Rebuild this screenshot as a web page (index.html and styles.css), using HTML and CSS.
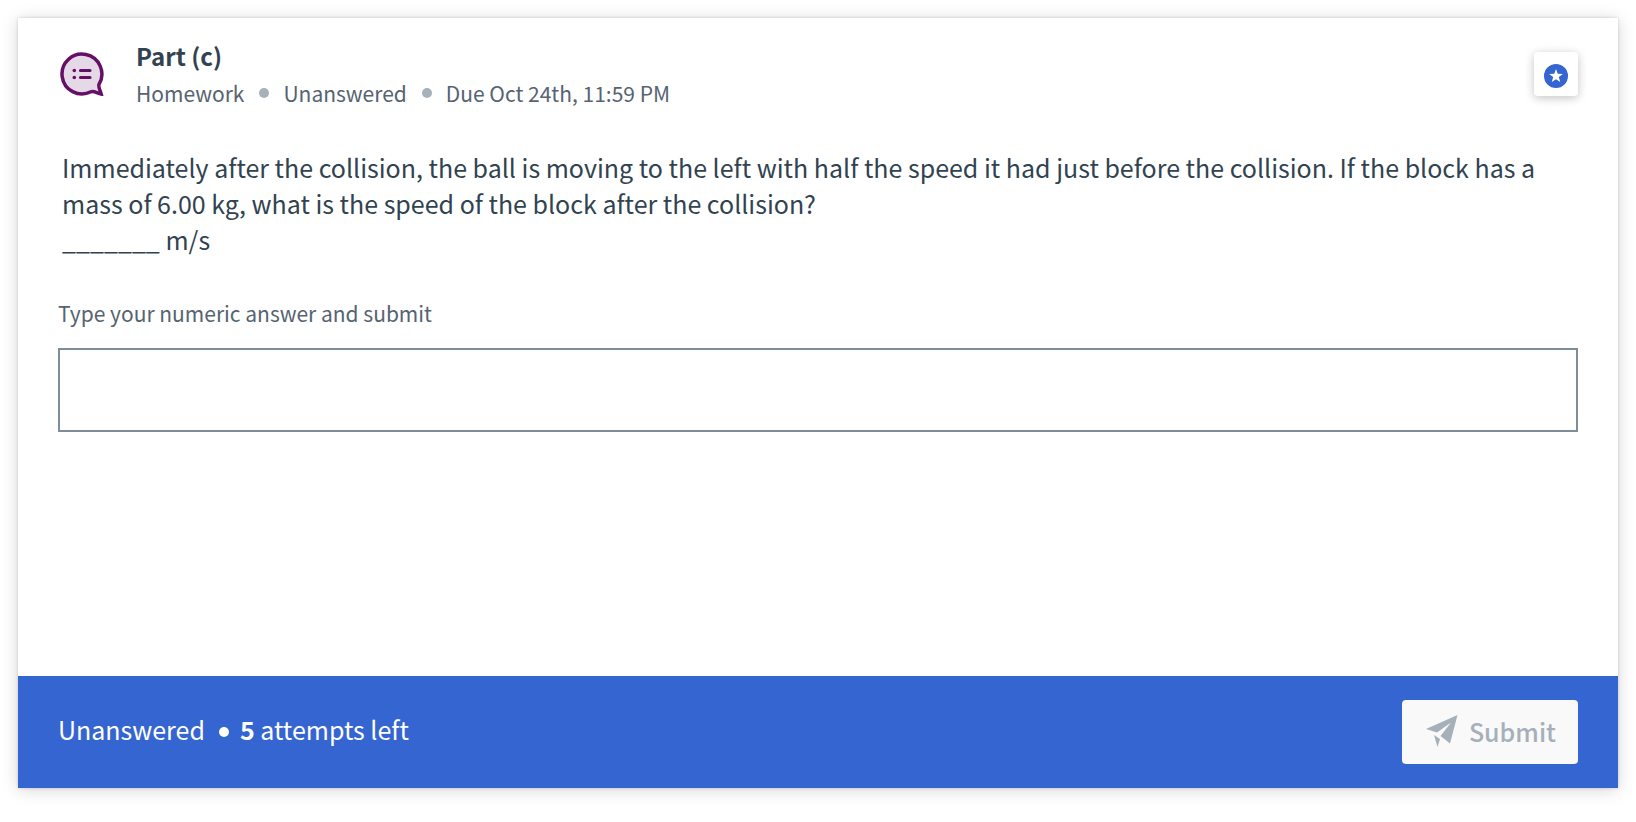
FILE: index.html
```html
<!DOCTYPE html>
<html lang="en">
<head>
<meta charset="utf-8">
<title>Part (c)</title>
<link rel="stylesheet" href="styles.css">
</head>
<body>
<main class="card">
  <header class="header">
    <svg class="type-icon" viewBox="0 0 44 44" aria-hidden="true">
      <path d="M30.9 39.8C33.5 38.8 37 41 41.2 42.1 40.1 38 37.8 34.6 39.1 32.1A19.9 19.9 0 1 0 30.9 39.8Z" fill="#e6d9e7" stroke="#650f66" stroke-width="3.5"/>
      <path d="M20.5 18.5H30M20.5 25.5H30" stroke="#650f66" stroke-width="3.2" stroke-linecap="round"/>
      <circle cx="14.3" cy="18.5" r="1.8" fill="#650f66"/>
      <circle cx="14.3" cy="25.5" r="1.8" fill="#650f66"/>
    </svg>
    <div class="heading">
      <h1 class="title">Part (c)</h1>
      <div class="meta">
        <span>Homework</span><i class="dot"></i><span>Unanswered</span><i class="dot"></i><span>Due Oct 24th, 11:59 PM</span>
      </div>
    </div>
    <button class="star" type="button" aria-label="Bookmark">
      <svg viewBox="0 0 24 24" width="24" height="24" aria-hidden="true">
        <circle cx="12" cy="12" r="12" fill="#3565d1"/>
        <path d="M12 5L13.7 9.7 18.9 9.9 14.8 13 16.2 18 12 15.2 7.8 18 9.2 13 5.1 9.9 10.3 9.7Z" fill="#fff"/>
      </svg>
    </button>
  </header>
  <p class="question">Immediately after the collision, the ball is moving to the left with half the speed it had just before the collision. If the block has a mass of 6.00 kg, what is the speed of the block after the collision?<br>_______ m/s</p>
  <form class="answer" id="answer-form">
    <label class="label" for="answer">Type your numeric answer and submit</label>
    <input class="field" id="answer" type="text" inputmode="decimal">
  </form>
  <footer class="footer">
    <div class="status"><span>Unanswered</span><i class="dot dot-light"></i><span><b>5</b> attempts left</span></div>
    <button class="submit" type="submit" form="answer-form" disabled>
      <svg viewBox="0 0 32 32" width="32" height="32" aria-hidden="true">
        <path d="M31.5 0L24 28.5 14.5 21 25 7.5 11 17.5 0 14Z" fill="#a5b0b9"/>
        <path d="M8 20L14 24 11.5 32Z" fill="#a5b0b9"/>
      </svg>
      <span>Submit</span>
    </button>
  </footer>
</main>
</body>
</html>
```
FILE: styles.css
```css
* {
  box-sizing: border-box;
}

body {
  margin: 0;
  padding: 18px 18px 34px;
  background: #fff;
  color: #314351;
  font-family: "Noto Sans CJK SC", "Noto Sans", sans-serif;
  font-size: 25px;
  line-height: 36px;
}

.card {
  display: flex;
  flex-direction: column;
  min-height: calc(100vh - 52px);
  background: #fff;
  box-shadow: 0 0 3px rgba(0, 0, 0, 0.16), 0 2px 16px rgba(0, 0, 0, 0.16);
}

.header {
  display: flex;
  align-items: flex-start;
  padding: 20px 40px 0;
}

.type-icon {
  width: 44px;
  height: 44px;
  margin: 14px 32px 0 2px;
  flex: none;
  fill: none;
}

.heading {
  flex: 1;
}

.title {
  margin: 0;
  font-size: 24px;
  font-weight: 600;
}

.meta {
  display: flex;
  align-items: center;
  flex-wrap: wrap;
  padding-top: 1px;
  color: #566371;
  font-size: 21px;
}

.dot {
  width: 10px;
  height: 10px;
  margin: 0 14px 0 15px;
  border-radius: 50%;
  background: #a5b1bb;
}

.dot-light {
  margin: 6px 11px 0 14px;
  background: #fff;
}

.star {
  display: flex;
  align-items: center;
  justify-content: center;
  width: 44px;
  height: 44px;
  margin-top: 14px;
  padding: 4px 0 0;
  border: 0;
  border-radius: 4px;
  background: #fff;
  box-shadow: 0 2px 10px rgba(0, 0, 0, 0.24);
}

.question {
  margin: 38px 44px 0;
}

.answer {
  display: flex;
  flex-direction: column;
  gap: 17px;
  margin: 38px 40px 0;
}

.label {
  color: #566371;
  font-size: 21px;
}

.field {
  width: 100%;
  height: 84px;
  padding: 0 16px;
  border: 2px solid #7f8c99;
  border-radius: 0;
  background: #fff;
  color: inherit;
  font: inherit;
}

.footer {
  display: flex;
  align-items: center;
  justify-content: space-between;
  margin-top: auto;
  padding: 24px 40px;
  background: #3565d1;
  color: #fff;
}

.status {
  display: flex;
  align-items: center;
  padding-bottom: 6px;
}

.submit {
  display: flex;
  align-items: center;
  gap: 11px;
  height: 64px;
  padding: 0 22px 2px 24px;
  border: 0;
  border-radius: 4px;
  background: #f9f9f9;
  color: #a5b0b9;
  font: inherit;
  font-weight: 500;
}
```
